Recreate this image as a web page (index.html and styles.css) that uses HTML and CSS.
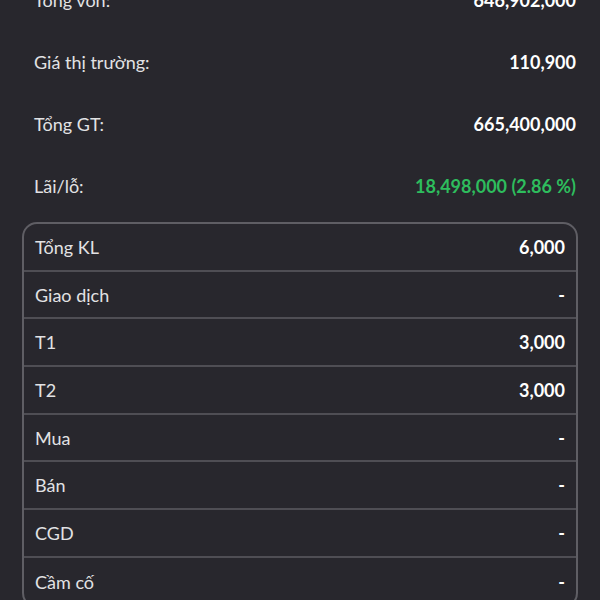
FILE: index.html
```html
<!DOCTYPE html>
<html lang="vi">
<head>
<meta charset="UTF-8">
<meta name="viewport" content="width=device-width, initial-scale=1.0">
<title>Chi tiết danh mục</title>
<link rel="stylesheet" href="styles.css">
</head>
<body>
<div class="container">
  <div class="summary">
    <div class="summary-row"><span class="label">Tổng vốn:</span><span class="value">646,902,000</span></div>
    <div class="summary-row"><span class="label">Giá thị trường:</span><span class="value">110,900</span></div>
    <div class="summary-row"><span class="label">Tổng GT:</span><span class="value">665,400,000</span></div>
    <div class="summary-row"><span class="label">Lãi/lỗ:</span><span class="value up">18,498,000 (2.86 %)</span></div>
  </div>

  <div class="detail-box">
    <div class="detail-row"><span class="label">Tổng KL</span><span class="value">6,000</span></div>
    <div class="detail-row"><span class="label">Giao dịch</span><span class="value">-</span></div>
    <div class="detail-row"><span class="label">T1</span><span class="value">3,000</span></div>
    <div class="detail-row"><span class="label">T2</span><span class="value">3,000</span></div>
    <div class="detail-row"><span class="label">Mua</span><span class="value">-</span></div>
    <div class="detail-row"><span class="label">Bán</span><span class="value">-</span></div>
    <div class="detail-row"><span class="label">CGD</span><span class="value">-</span></div>
    <div class="detail-row"><span class="label">Cầm cố</span><span class="value">-</span></div>
  </div>
</div>
</body>
</html>
```

FILE: styles.css
```css
* {
  padding: 0;
  margin: 0;
  box-sizing: border-box;
  font-family: Lato, "Noto Sans", sans-serif;
}
html, body {
  background-color: #28272d;
  height: 100%;
  overflow: hidden;
}
.container {
  padding: 0 22px;
}
.summary {
  margin-top: -31px; /* trang đang cuộn xuống một chút */
  padding: 0 2px 0 12px;
}
.summary-row {
  height: 62px;
  display: flex;
  align-items: center;
  justify-content: space-between;
  font-size: 18px;
}
.label {
  color: #e2e2e4;
}
.value {
  color: #ffffff;
  font-weight: 700;
}
.value.up {
  color: #2ebd5d;
}
.detail-box {
  margin-top: 5px;
  border: 2px solid #5f5e64;
  border-radius: 15px;
  overflow: hidden;
}
.detail-row {
  height: 47.7px;
  display: flex;
  align-items: center;
  justify-content: space-between;
  padding: 0 11px;
  font-size: 18px;
  border-bottom: 2px solid #4f4e54;
}
.detail-row:last-child {
  border-bottom: none;
}
```
